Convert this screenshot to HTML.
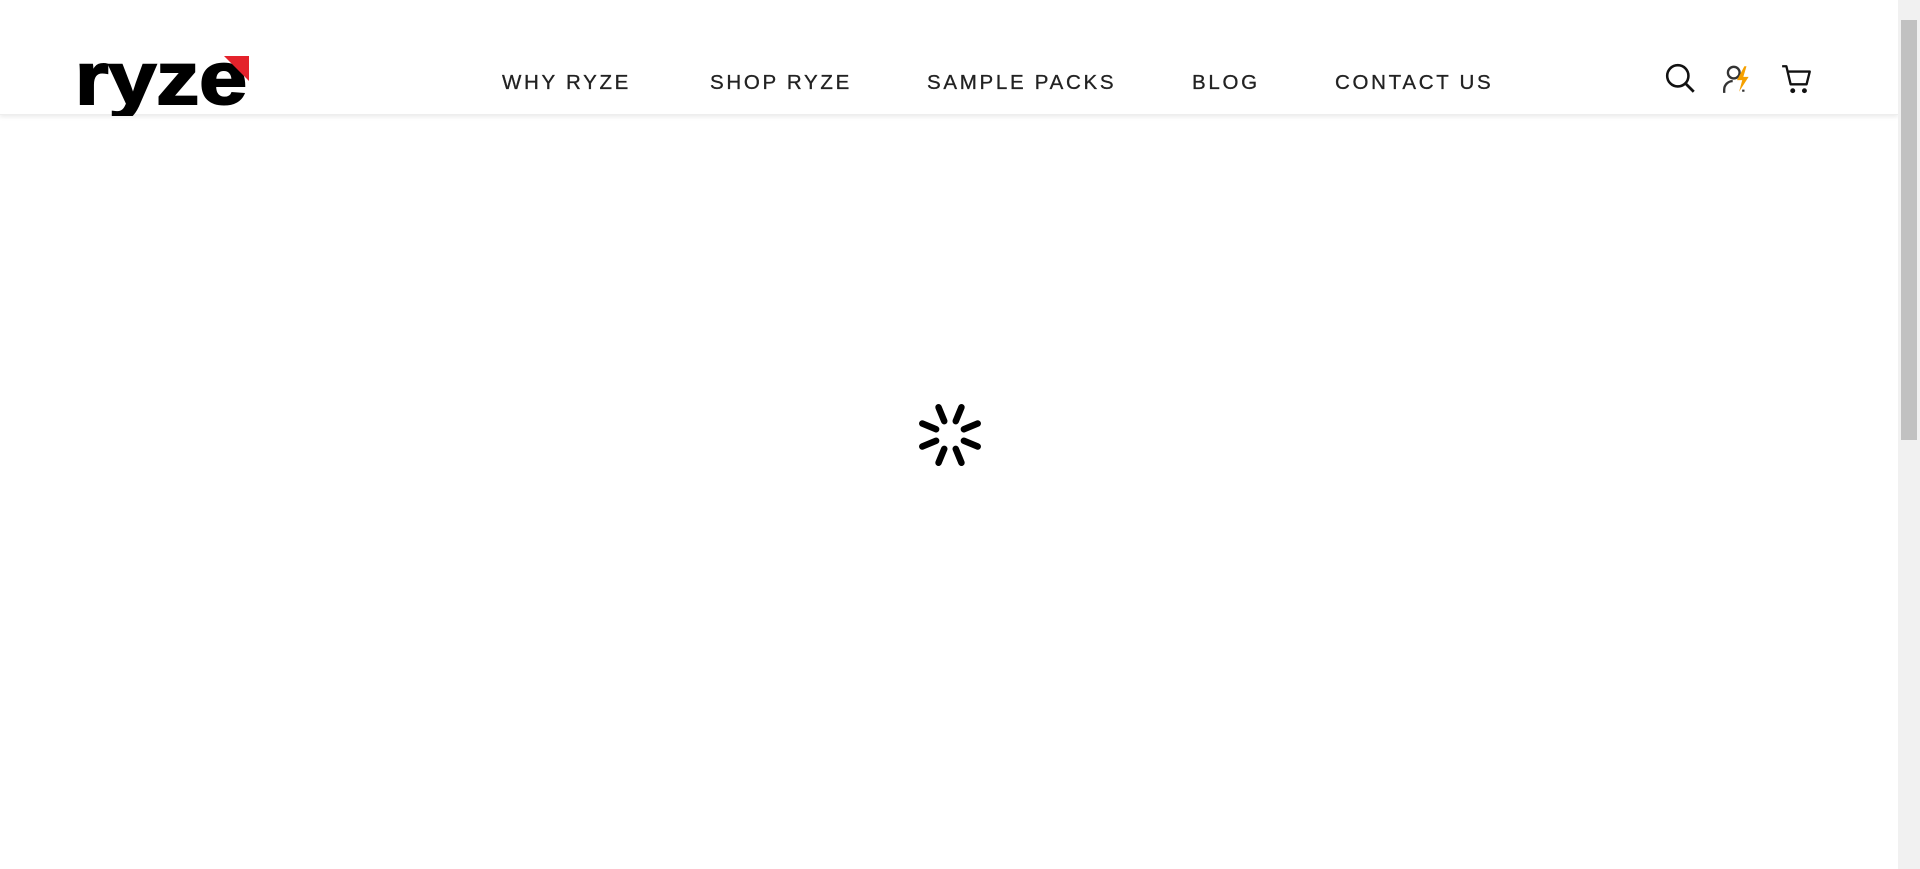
<!DOCTYPE html>
<html><head><style>
html,body{margin:0;padding:0;width:1920px;height:869px;overflow:hidden;background:#fff;font-family:"Liberation Sans",sans-serif}
.hdr{position:absolute;left:0;top:0;width:1898px;height:114px;background:#fff;box-shadow:0 2px 4px rgba(0,0,0,.08);border-bottom:1px solid #eee}
.nav a{position:absolute;top:71px;font-size:20.5px;letter-spacing:2.7px;color:#222;text-decoration:none;line-height:24px;-webkit-text-stroke:0.3px #222}
.sb{position:absolute;left:1898px;top:0;width:22px;height:869px;background:#f1f1f1}
.th{position:absolute;left:3px;top:20px;width:16px;height:420px;background:#c1c1c1}
</style></head><body>
<div class="hdr">
<svg style="position:absolute;left:74px;top:52px" width="176" height="64" viewBox="0 0 176 64">
<text x="1" y="52" font-family="Liberation Sans" font-weight="bold" font-size="74" textLength="172" lengthAdjust="spacingAndGlyphs" fill="#000" stroke="#000" stroke-width="2">ryze</text>
<polygon points="150,4 175,4 175,29" fill="#e4222b"/>
</svg>
<div class="nav">
<a style="left:502px">WHY RYZE</a>
<a style="left:710px">SHOP RYZE</a>
<a style="left:927px">SAMPLE PACKS</a>
<a style="left:1192px">BLOG</a>
<a style="left:1335px">CONTACT US</a>
</div>
<svg style="position:absolute;left:1664px;top:62px" width="34" height="34" viewBox="0 0 32 32"><circle cx="13" cy="13" r="10" fill="none" stroke="#111" stroke-width="2.4"/><line x1="20.5" y1="20.5" x2="28" y2="28" stroke="#111" stroke-width="2.6"/></svg>
<svg style="position:absolute;left:1721px;top:62px" width="34" height="34" viewBox="0 0 32 32"><circle cx="12" cy="10" r="5.5" fill="none" stroke="#333" stroke-width="2.2"/><path d="M3 29v-3a8 8 0 0 1 8-8" fill="none" stroke="#333" stroke-width="2.2"/><path d="M21 28v-2" stroke="#333" stroke-width="2.2"/><path d="M22 4l-7 13h5l-3 11 9-14h-5l3-10z" fill="#f5a000"/></svg>
<svg style="position:absolute;left:1780px;top:62px" width="34" height="34" viewBox="0 0 32 32"><path d="M2 4h4l4 17h15l3-12H8" fill="none" stroke="#111" stroke-width="2.2" stroke-linejoin="round"/><circle cx="12" cy="27" r="2.3" fill="#111"/><circle cx="23" cy="27" r="2.3" fill="#111"/></svg>
</div>
<svg style="position:absolute;left:910px;top:400px" width="80" height="70" viewBox="-40 -35 80 70">
<g stroke="#000" stroke-width="6.5" stroke-linecap="round">
<line x1="0" y1="-15" x2="0" y2="-30" transform="rotate(-22.5)"/>
<line x1="0" y1="-15" x2="0" y2="-30" transform="rotate(22.5)"/>
<line x1="0" y1="-15" x2="0" y2="-30" transform="rotate(67.5)"/>
<line x1="0" y1="-15" x2="0" y2="-30" transform="rotate(112.5)"/>
<line x1="0" y1="-15" x2="0" y2="-30" transform="rotate(157.5)"/>
<line x1="0" y1="-15" x2="0" y2="-30" transform="rotate(202.5)"/>
<line x1="0" y1="-15" x2="0" y2="-30" transform="rotate(247.5)"/>
<line x1="0" y1="-15" x2="0" y2="-30" transform="rotate(292.5)"/>
</g></svg>
<div class="sb"><div class="th"></div></div>
</body></html>
